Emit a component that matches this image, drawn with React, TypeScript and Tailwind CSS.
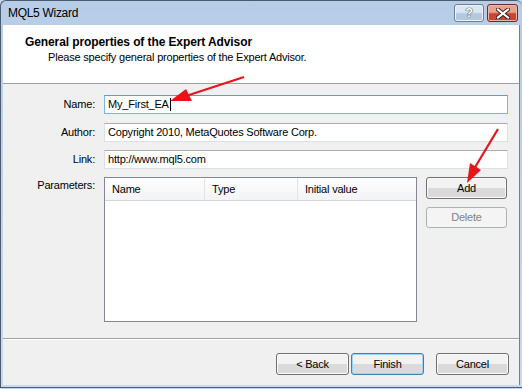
import React from "react";

function WinButton({
  children,
  className = "",
  disabled = false,
  isDefault = false,
}: {
  children: React.ReactNode;
  className?: string;
  disabled?: boolean;
  isDefault?: boolean;
}) {
  if (disabled) {
    return (
      <div
        className={`flex items-center justify-center rounded-[3px] border border-[#adb2b5] bg-[#f4f4f4] text-[#838383] ${className}`}
      >
        {children}
      </div>
    );
  }
  return (
    <div
      className={`flex items-center justify-center rounded-[3px] border ${
        isDefault ? "border-[#3c7fb1] shadow-[inset_0_0_0_1px_#9ed5f4]" : "border-[#707070] shadow-[inset_0_0_0_1px_#fbfbfb]"
      } bg-gradient-to-b from-[#f2f2f2] from-50% to-[#dadada] to-50% text-black ${className}`}
    >
      {children}
    </div>
  );
}

function Field({ value, focused = false }: { value: string; focused?: boolean }) {
  return (
    <div
      className={`h-[19px] flex-1 flex items-center bg-white border ${
        focused
          ? "border-[#7eb4ea] border-t-[#569de5]"
          : "border-[#dbdfe6] border-t-[#abadb3]"
      } pl-[3px]`}
    >
      <span>{value}</span>
      {focused && <span className="ml-[1px] inline-block w-[1px] h-[13px] bg-black" />}
    </div>
  );
}

export default function App() {
  return (
    <div className="w-[522px] h-[389px] overflow-hidden bg-[#c3d7ed]">
      <div className="relative w-[522px] h-[388px] flex flex-col rounded-tl-[6px] rounded-tr-[6px] border-l border-t border-b border-[#4c5b6e] bg-gradient-to-b from-[#b7cde7] to-[#c7daee] font-['Liberation_Sans',Arial,sans-serif] text-[11px] tracking-[-0.2px] text-black">
        {/* title bar */}
        <div className="h-[24px] shrink-0 flex items-start justify-between pl-[7px] pr-[4px]">
          <div className="pt-[5px] text-[12px] leading-[15px] tracking-[-0.3px] text-black">MQL5 Wizard</div>
          <div className="flex gap-[3px] pt-[3px]">
            <div className="w-[30px] h-[18px] rounded-[3px] border border-[#6c7f99] bg-gradient-to-b from-[#dbe6f3] from-45% to-[#b4c8e0] to-55% flex items-center justify-center shadow-[inset_0_0_0_1px_#eef3fa]">
              <span className="text-[13px] font-bold leading-[14px] text-white [text-shadow:0_0_1px_#333,0_0_1px_#333]">?</span>
            </div>
            <div className="w-[31px] h-[18px] rounded-[3px] border border-[#6e2a22] bg-gradient-to-b from-[#e6a08f] from-45% to-[#c8452f] to-55% flex items-center justify-center shadow-[inset_0_0_0_1px_#f0b7a8]">
              <svg width="14" height="11" viewBox="0 0 14 11">
                <path d="M2 1.5 L12 9.5 M12 1.5 L2 9.5" stroke="#3a1a14" strokeWidth="4" strokeLinecap="square" />
                <path d="M2 1.5 L12 9.5 M12 1.5 L2 9.5" stroke="#ffffff" strokeWidth="2.2" strokeLinecap="square" />
              </svg>
            </div>
          </div>
        </div>

        {/* body */}
        <div className="ml-[2px] w-[517px] h-[360px] shrink-0 flex flex-col bg-[#f0f0f0] border-r border-[#6f8196]">
          {/* header */}
          <div className="h-[59px] bg-white border-b border-[#a0a0a0] pl-[22px] pt-[10px]">
            <div className="text-[12px] font-bold leading-[14px] tracking-[-0.1px]">
              General properties of the Expert Advisor
            </div>
            <div className="mt-[1px] pl-[23px] leading-[14px]">
              Please specify general properties of the Expert Advisor.
            </div>
          </div>

          {/* form */}
          <div className="pt-[11px] pr-[11px] flex flex-col">
            <div className="flex items-center">
              <div className="w-[92px] text-right">Name:</div>
              <div className="w-[9px]" />
              <Field value="My_First_EA" focused />
            </div>
            <div className="flex items-center mt-[9px]">
              <div className="w-[92px] text-right">Author:</div>
              <div className="w-[9px]" />
              <Field value="Copyright 2010, MetaQuotes Software Corp." />
            </div>
            <div className="flex items-center mt-[8px]">
              <div className="w-[92px] text-right">Link:</div>
              <div className="w-[9px]" />
              <Field value="http://www.mql5.com" />
            </div>
            <div className="flex items-start mt-[8px]">
              <div className="w-[92px] text-right pt-[1px] leading-[14px]">Parameters:</div>
              <div className="w-[9px]" />
              <div className="w-[313px] h-[145px] border border-[#828790] bg-white flex flex-col">
                <div className="h-[23px] flex border-b border-[#d5d5d5] bg-gradient-to-b from-white to-[#f3f4f6]">
                  <div className="w-[100px] flex items-center pl-[7px] border-r border-[#e3e4e6]">Name</div>
                  <div className="w-[93px] flex items-center pl-[7px] border-r border-[#e3e4e6]">Type</div>
                  <div className="flex-1 flex items-center pl-[7px]">Initial value</div>
                </div>
              </div>
              <div className="w-[9px]" />
              <div className="flex flex-col gap-[8px]">
                <WinButton className="w-[81px] h-[22px]">Add</WinButton>
                <WinButton className="w-[81px] h-[21px]" disabled>
                  Delete
                </WinButton>
              </div>
            </div>
          </div>

          {/* bottom separator */}
          <div className="mt-[16px] h-[1px] bg-[#a0a0a0]" />
          <div className="h-[1px] bg-white" />

          {/* buttons */}
          <div className="pt-[13px] pr-[10px] flex justify-end">
            <WinButton className="w-[73px] h-[22px]">&lt; Back</WinButton>
            <WinButton className="ml-[2px] w-[73px] h-[22px]" isDefault>
              Finish
            </WinButton>
            <WinButton className="ml-[12px] w-[73px] h-[22px]">Cancel</WinButton>
          </div>
        </div>

        {/* red arrows (annotations) */}
        <svg className="absolute left-[-1px] top-[-1px] pointer-events-none" width="522" height="389" viewBox="0 0 522 389">
          <line x1="244" y1="77" x2="186" y2="96" stroke="#e8141a" strokeWidth="2.2" />
          <polygon points="170,101 192,101 186,89" fill="#e8141a" />
          <line x1="498" y1="129" x2="474" y2="169" stroke="#e8141a" strokeWidth="2.2" />
          <polygon points="467,183 481,170 470,163" fill="#e8141a" />
        </svg>
      </div>
    </div>
  );
}
